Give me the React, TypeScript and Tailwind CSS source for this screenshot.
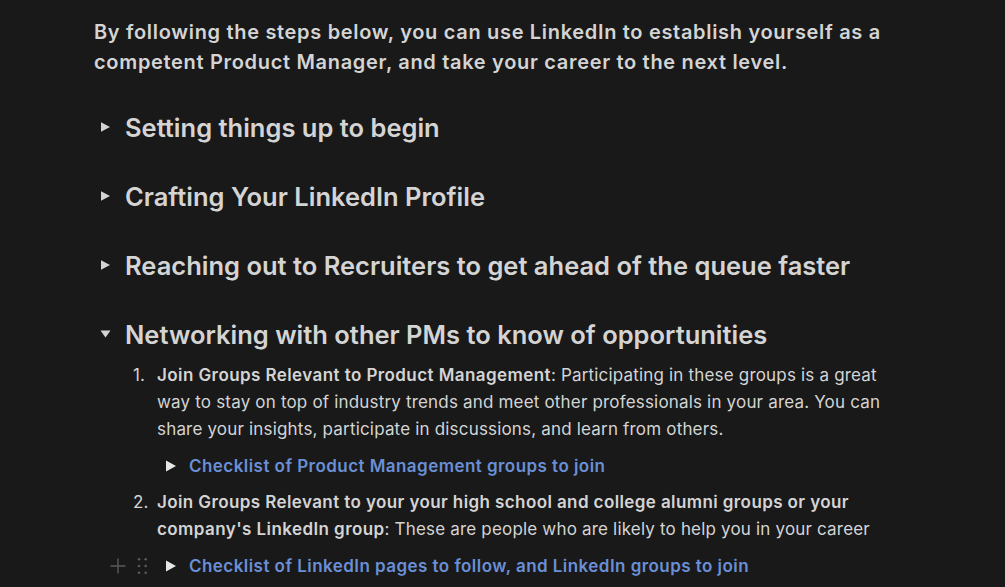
import React from "react";

const Tri = ({ open = false, big = false, className = "" }: { open?: boolean; big?: boolean; className?: string }) => (
  <svg width="12" height="12" viewBox="0 0 12 12" className={className}>
    {open ? (
      <polygon points="0.5,2.5 10.5,2.5 5.5,9.5" fill="currentColor" />
    ) : big ? (
      <polygon points="1,0.5 11,6 1,11.5" fill="currentColor" />
    ) : (
      <polygon points="1,1.3 10,6 1,10.7" fill="currentColor" />
    )}
  </svg>
);

const Heading = ({ text, open = false }: { text: string; open?: boolean }) => (
  <div className="flex items-center h-[33px] -ml-[31px]">
    <div className="w-[31px] flex justify-start pl-[6px]">
      <Tri open={open} className="text-[#d4d4d4]" />
    </div>
    <div className="text-[25.5px] font-semibold leading-[33px] whitespace-nowrap">{text}</div>
  </div>
);

const ChecklistRow = ({ text, handles = false }: { text: string; handles?: boolean }) => (
  <div className="relative flex items-center h-[30px]">
    {handles && (
      <>
        <svg width="16" height="16" viewBox="0 0 16 16" className="absolute left-[-47px] top-[7px] text-[#5a5a5a]">
          <path d="M8 0.5v15M0.5 8h15" stroke="currentColor" strokeWidth="1.4" />
        </svg>
        <svg width="10" height="18" viewBox="0 0 10 18" className="absolute left-[-20px] top-[6px] text-[#5a5a5a]">
          {[2, 8.7].map((x) =>
            [2.3, 9, 15.7].map((y) => <circle key={x + "-" + y} cx={x} cy={y} r="1.3" fill="currentColor" />)
          )}
        </svg>
      </>
    )}
    <div className="w-[32px] flex justify-start pl-[8px]">
      <Tri big className="text-[#e6e6e6]" />
    </div>
    <div className="text-[17px] font-semibold tracking-[0.45px] text-[#6a8fd6] whitespace-nowrap">{text}</div>
  </div>
);

export default function App() {
  return (
    <div
      className="w-[1005px] h-[587px] overflow-hidden bg-[#191919] text-[#d4d4d4]"
      style={{ fontFamily: "Inter, 'Noto Sans', sans-serif" }}
    >
      <div className="pl-[94px] pt-[17px]">
        <div className="text-[20px] font-semibold leading-[30px] tracking-[0.68px] whitespace-nowrap">
          <div>By following the steps below, you can use LinkedIn to establish yourself as a</div>
          <div>competent Product Manager, and take your career to the next level.</div>
        </div>

        <div className="pl-[31px] mt-[33.5px] flex flex-col gap-[36px]">
          <Heading text="Setting things up to begin" />
          <Heading text="Crafting Your LinkedIn Profile" />
          <Heading text="Reaching out to Recruiters to get ahead of the queue faster" />
          <Heading text="Networking with other PMs to know of opportunities" open />
        </div>

        <div className="pl-[63px] mt-[11px] text-[17px] leading-[27px] tracking-[0.18px]">
          <div className="flex">
            <div className="w-[24px] -ml-[24px]">1.</div>
            <div className="whitespace-nowrap">
              <div>
                <span className="font-semibold tracking-[0.42px]">Join Groups Relevant to Product Management</span>: Participating in these groups is a great
              </div>
              <div>way to stay on top of industry trends and meet other professionals in your area. You can</div>
              <div>share your insights, participate in discussions, and learn from others.</div>
            </div>
          </div>
          <div className="mt-[8.5px]">
            <ChecklistRow text="Checklist of Product Management groups to join" />
          </div>
          <div className="flex mt-[7.5px]">
            <div className="w-[24px] -ml-[24px]">2.</div>
            <div className="whitespace-nowrap">
              <div className="font-semibold tracking-[0.4px]">Join Groups Relevant to your your high school and college alumni groups or your</div>
              <div>
                <span className="font-semibold tracking-[0.42px]">company's LinkedIn group</span>: These are people who are likely to help you in your career
              </div>
            </div>
          </div>
          <div className="mt-[8.5px]">
            <ChecklistRow text="Checklist of LinkedIn pages to follow, and LinkedIn groups to join" handles />
          </div>
        </div>
      </div>
    </div>
  );
}
